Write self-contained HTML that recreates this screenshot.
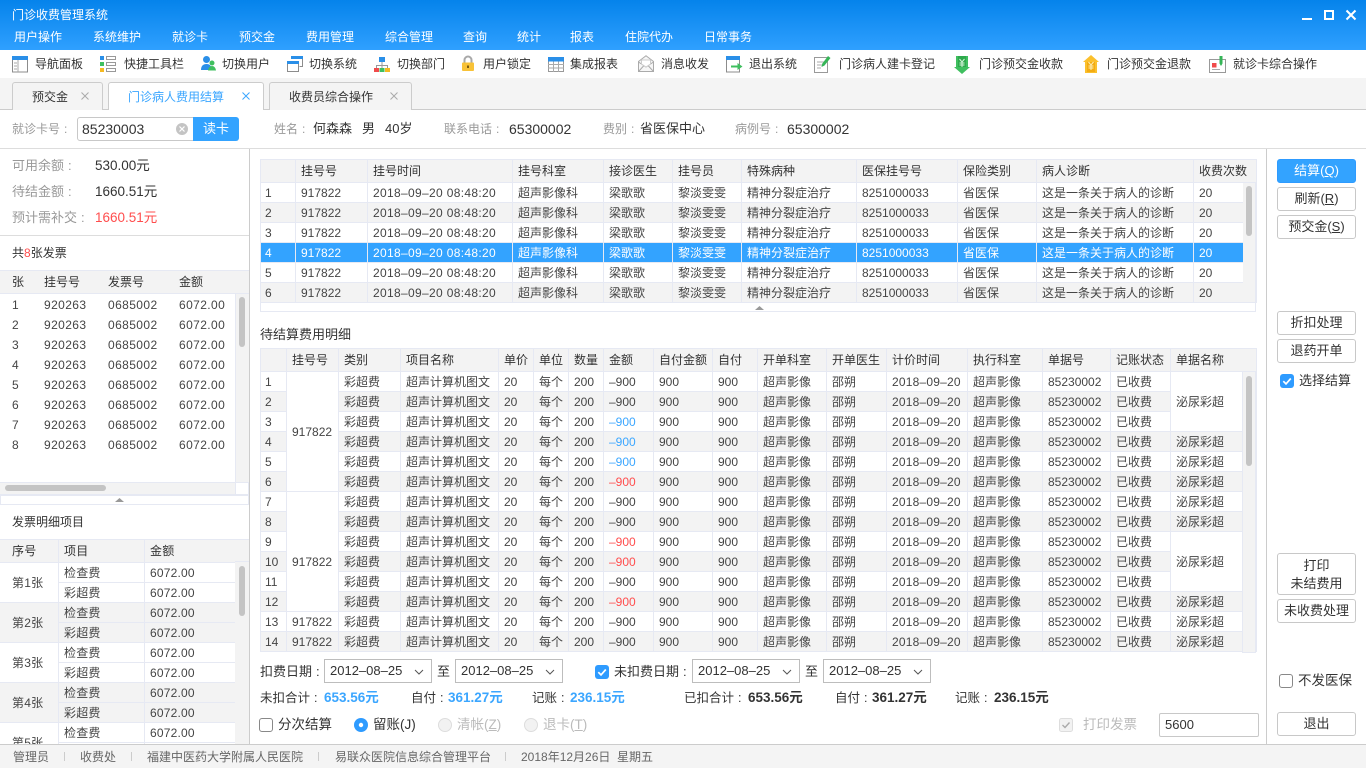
<!DOCTYPE html>
<html lang="zh"><head><meta charset="utf-8"><title>门诊收费管理系统</title>
<style>
*{box-sizing:border-box}
html,body{margin:0;padding:0}
body{width:1366px;height:768px;overflow:hidden;position:relative;background:#fff;font:12px/16px "Liberation Sans","Noto Sans CJK SC",sans-serif;color:#333}
.a{position:absolute;white-space:nowrap;line-height:16px}
.b{position:absolute}
.g{color:#999}
.w{color:#fff}
.c{font-weight:400;margin-left:4px}
svg{position:absolute;overflow:visible}
table{position:absolute;border-collapse:collapse;table-layout:fixed;font-size:12px;color:#444;background:#fff}
td,th{border:1px solid #e6e9f3;height:20px;padding:0 0 0 5px;font-weight:400;text-align:left;white-space:nowrap;overflow:hidden;line-height:16px}
th{background:#f3f3f3;color:#333;height:23px}
tr.z td{background:#f3f3f3}
tr.s td{background:#33a3ff;color:#fff}
td.m,tr.z td.m{background:#fff}
.d{letter-spacing:.33px}
.e{letter-spacing:.2px}
.bl{color:#3ba6ff}.rd{color:#ff4d4d}
.btn{position:absolute;left:1277px;width:79px;border:1px solid #c8c8c8;border-radius:3px;background:#fff;text-align:center;font-size:13px;line-height:22px;color:#333}
.sel{position:absolute;top:659px;width:108px;height:24px;border:1px solid #bdbdbd;font-size:13px;line-height:22px;padding-left:5px;color:#333;background:#fff}
.sel svg{left:89px;top:9px}
.tab{position:absolute;top:82px;height:28px;border:1px solid #ccc;border-bottom:0;border-radius:3px 3px 0 0;background:#f4f4f4}
.sb{position:absolute;width:6px;background:#c4c4c4;border-radius:3px}
#l2 td{padding-top:1px}
u{text-underline-offset:1px}
</style></head><body>

<!-- title bar -->
<div class="b" style="left:0;top:0;width:1366px;height:50px;background:linear-gradient(#0583eb,#2fa0ff)"></div>
<span class="a w" style="left:12px;top:7px">门诊收费管理系统</span>
<span class="a w" style="left:14px;top:29px">用户操作</span>
<span class="a w" style="left:93px;top:29px">系统维护</span>
<span class="a w" style="left:172px;top:29px">就诊卡</span>
<span class="a w" style="left:239px;top:29px">预交金</span>
<span class="a w" style="left:306px;top:29px">费用管理</span>
<span class="a w" style="left:385px;top:29px">综合管理</span>
<span class="a w" style="left:463px;top:29px">查询</span>
<span class="a w" style="left:517px;top:29px">统计</span>
<span class="a w" style="left:570px;top:29px">报表</span>
<span class="a w" style="left:625px;top:29px">住院代办</span>
<span class="a w" style="left:704px;top:29px">日常事务</span>
<div class="b" style="left:1302px;top:18px;width:10px;height:2px;background:#fff"></div>
<div class="b" style="left:1324px;top:10px;width:10px;height:10px;border:2px solid #fff"></div>
<svg style="left:1346px;top:10px" width="10" height="10"><path d="M.5 .5L9.5 9.5M9.5 .5L.5 9.5" stroke="#fff" stroke-width="2" fill="none"/></svg>

<!-- toolbar -->
<div class="b" style="left:0;top:50px;width:1366px;height:28px;background:#fff"></div>
<svg style="left:12px;top:56px" width="16" height="17"><rect x=".5" y=".5" width="15" height="15.5" fill="#fff" stroke="#8c8c8c"/><rect width="16" height="4" fill="#2a8fe8"/><path d="M6 4v12M2 7h3M2 10h3M2 13h3" stroke="#aaa" fill="none"/></svg>
<span class="a" style="left:35px;top:56px">导航面板</span>
<svg style="left:100px;top:56px" width="16" height="16"><rect width="4" height="4" fill="#2a8fe8"/><rect y="6" width="4" height="4" fill="#3fbf5f"/><rect y="12" width="4" height="4" fill="#f5b920"/><path d="M6.500 .5h9v3h-9zM6.500 6.500h9v3h-9zM6.500 12.500h9v3h-9z" stroke="#999" fill="#fff"/></svg>
<span class="a" style="left:124px;top:56px">快捷工具栏</span>
<svg style="left:201px;top:56px" width="15" height="15"><circle cx="5.500" cy="3.500" r="3.500" fill="#2a8fe8"/><path d="M0 14c0-4 2-6 5.500-6s5 2 5.500 6z" fill="#2a8fe8"/><circle cx="11" cy="7" r="2.500" fill="#3fbf5f"/><path d="M7 14.500c.5-3 2-4.500 4-4.500s3.500 1.500 4 4.500z" fill="#3fbf5f"/></svg>
<span class="a" style="left:222px;top:56px">切换用户</span>
<svg style="left:287px;top:56px" width="16" height="16"><path d="M4.500 .5h11v10h-3" fill="#fff" stroke="#8c8c8c"/><rect x="4" width="12" height="3" fill="#2a8fe8"/><rect x=".5" y="5.500" width="11" height="10" fill="#fff" stroke="#8c8c8c"/><rect y="5" width="12" height="3" fill="#2a8fe8"/></svg>
<span class="a" style="left:309px;top:56px">切换系统</span>
<svg style="left:374px;top:57px" width="16" height="15"><path d="M8 4v4M2.500 11V8.500h11V11M8 8v3" stroke="#999" fill="none"/><rect x="5" width="6" height="5" fill="#2a8fe8"/><rect y="11" width="5" height="4" fill="#f04b4b"/><rect x="5.500" y="11" width="5" height="4" fill="#3fbf5f"/><rect x="11" y="11" width="5" height="4" fill="#f5b920"/></svg>
<span class="a" style="left:397px;top:56px">切换部门</span>
<svg style="left:462px;top:56px" width="12" height="15"><path d="M2.500 7V4a3.500 3.500 0 0 1 7 0v3" stroke="#a8a8a8" stroke-width="2" fill="none"/><rect y="6.500" width="12" height="8.500" rx="1" fill="#f8c237"/><rect x="5" y="9.500" width="2" height="2.500" fill="#7a5a10"/></svg>
<span class="a" style="left:483px;top:56px">用户锁定</span>
<svg style="left:548px;top:57px" width="16" height="15"><rect x=".5" y=".5" width="15" height="14" fill="#fff" stroke="#999"/><path d="M0 7.500h16M0 11h16M5.500 4v11M10.500 4v11" stroke="#aaa" fill="none"/><rect width="16" height="4.500" fill="#2a8fe8"/></svg>
<span class="a" style="left:570px;top:56px">集成报表</span>
<svg style="left:638px;top:55px" width="16" height="17"><path d="M.5 6.500L8 .7l7.500 5.800v10H.5z" fill="#f6f6f6" stroke="#aaa"/><path d="M.5 7l7.500 5 7.500-5M.5 16.500L6 10.500M15.500 16.500L10 10.500" stroke="#aaa" fill="none"/><path d="M3.500 5h9v4l-4.500 3-4.500-3z" fill="#fff" stroke="#ccc"/></svg>
<span class="a" style="left:661px;top:56px">消息收发</span>
<svg style="left:726px;top:56px" width="17" height="17"><rect x=".5" y=".5" width="13" height="15.500" fill="#fff" stroke="#8c8c8c"/><rect width="14" height="4" fill="#2a8fe8"/><path d="M5 9.500h6.500V7l5 3.500-5 3.500v-2.500H5z" fill="#3fbf5f"/></svg>
<span class="a" style="left:749px;top:56px">退出系统</span>
<svg style="left:814px;top:56px" width="17" height="17"><rect x=".5" y="1.500" width="13" height="15" fill="#fff" stroke="#999"/><path d="M3 6h7M3 9h5M3 12h4" stroke="#aaa" fill="none"/><path d="M14 0l2.500 2-6 7.500-3 1.500.7-3.200z" fill="#35b557"/></svg>
<span class="a" style="left:839px;top:56px">门诊病人建卡登记</span>
<svg style="left:954px;top:56px" width="16" height="18"><path d="M2 0h12v11h2l-8 7-8-7h2z" fill="#3fbf5f"/><path d="M4 0h8v11H4z" fill="#2ea94c"/><path d="M5.500 3L8 6l2.500-3M5.500 7h5M5.500 9h5M8 6v5" stroke="#d8f5dd" fill="none"/></svg>
<span class="a" style="left:979px;top:56px">门诊预交金收款</span>
<svg style="left:1083px;top:55px" width="16" height="18"><path d="M8 0l8 7h-2v11H2V7H0z" fill="#fbc02d"/><path d="M4 7h8v10H4z" fill="#f3ac12"/><path d="M5.500 7L8 10l2.500-3M5.500 11h5M5.500 13h5M8 10v5" stroke="#fdeeb8" fill="none"/></svg>
<span class="a" style="left:1107px;top:56px">门诊预交金退款</span>
<svg style="left:1209px;top:56px" width="17" height="17"><rect x=".5" y="3.500" width="16" height="13" fill="#fff" stroke="#999"/><rect x="3" y="7" width="4.500" height="4.500" fill="#f04b4b"/><path d="M3 13.500h8" stroke="#aaa"/><path d="M10.500 0h3v7.500l-1.500 2.500-1.500-2.500z" fill="#35b557"/></svg>
<span class="a" style="left:1233px;top:56px">就诊卡综合操作</span>

<!-- tabs -->
<div class="b" style="left:0;top:78px;width:1366px;height:32px;background:#f4f4f4;border-bottom:1px solid #ccc"></div>
<div class="tab" style="left:12px;width:91px"></div>
<span class="a" style="left:32px;top:89px">预交金</span>
<svg style="left:81px;top:92px" width="8" height="8"><path d="M.5 .5l7 7M7.500 .5l-7 7" stroke="#aaa" fill="none"/></svg>
<div class="tab" style="left:108px;width:156px;background:#fff"></div>
<span class="a" style="left:128px;top:89px;color:#3ba6ff">门诊病人费用结算</span>
<svg style="left:242px;top:92px" width="8" height="8"><path d="M.5 .5l7 7M7.500 .5l-7 7" stroke="#3ba6ff" fill="none"/></svg>
<div class="tab" style="left:269px;width:143px"></div>
<span class="a" style="left:289px;top:89px">收费员综合操作</span>
<svg style="left:390px;top:92px" width="8" height="8"><path d="M.5 .5l7 7M7.500 .5l-7 7" stroke="#aaa" fill="none"/></svg>

<!-- info bar -->
<div class="b" style="left:0;top:148px;width:1366px;height:1px;background:#ddd"></div>
<span class="a g" style="left:12px;top:121px">就诊卡号<span class="c">:</span></span>
<div class="b" style="left:77px;top:117px;width:117px;height:24px;border:1px solid #c8c8c8;border-radius:3px 0 0 3px"></div>
<span class="a" style="left:82px;top:121px;font-size:14px">85230003</span>
<svg style="left:176px;top:123px" width="12" height="12"><circle cx="6" cy="6" r="6" fill="#c4c4c4"/><path d="M3.500 3.500l5 5M8.500 3.500l-5 5" stroke="#fff" stroke-width="1.200"/></svg>
<div class="b w" style="left:193px;top:117px;width:46px;height:24px;background:#33a3ff;border-radius:0 3px 3px 0;text-align:center;line-height:24px;font-size:13px">读卡</div>
<span class="a g" style="left:274px;top:121px">姓名<span class="c">:</span></span><span class="a" style="left:313px;top:121px;font-size:13px">何森森</span>
<span class="a" style="left:362px;top:121px;font-size:13px">男</span><span class="a" style="left:385px;top:121px;font-size:13px">40岁</span>
<span class="a g" style="left:444px;top:121px">联系电话<span class="c">:</span></span><span class="a" style="left:509px;top:121px;font-size:14px">65300002</span>
<span class="a g" style="left:603px;top:121px">费别<span class="c">:</span></span><span class="a" style="left:640px;top:121px;font-size:13px">省医保中心</span>
<span class="a g" style="left:735px;top:121px">病例号<span class="c">:</span></span><span class="a" style="left:787px;top:121px;font-size:14px">65300002</span>

<!-- left panel -->
<div class="b" style="left:249px;top:149px;width:1px;height:595px;background:#ccc"></div>
<span class="a g" style="left:12px;top:158px;font-size:13px">可用余额<span class="c">:</span></span><span class="a" style="left:95px;top:158px;font-size:13.500px">530.00元</span>
<span class="a g" style="left:12px;top:184px;font-size:13px">待结金额<span class="c">:</span></span><span class="a" style="left:95px;top:184px;font-size:13.500px">1660.51元</span>
<span class="a g" style="left:12px;top:210px;font-size:13px">预计需补交<span class="c">:</span></span><span class="a rd" style="left:95px;top:210px;font-size:13.500px">1660.51元</span>
<div class="b" style="left:0;top:235px;width:249px;height:1px;background:#ddd"></div>
<span class="a" style="left:12px;top:245px">共<span class="rd">8</span>张发票</span>
<div class="b" style="left:0;top:270px;width:249px;height:24px;background:#f3f3f3;border-top:1px solid #e6e9f3;border-bottom:1px solid #e6e9f3"></div>
<span class="a" style="left:12px;top:274px">张</span><span class="a" style="left:44px;top:274px">挂号号</span><span class="a" style="left:108px;top:274px">发票号</span><span class="a" style="left:179px;top:274px">金额</span>
<div class="a" style="left:12px;top:295px;line-height:20px;letter-spacing:.4px;color:#444">1<br>2<br>3<br>4<br>5<br>6<br>7<br>8</div>
<div class="a" style="left:44px;top:295px;line-height:20px;letter-spacing:.4px;color:#444">920263<br>920263<br>920263<br>920263<br>920263<br>920263<br>920263<br>920263</div>
<div class="a" style="left:108px;top:295px;line-height:20px;letter-spacing:.4px;color:#444">0685002<br>0685002<br>0685002<br>0685002<br>0685002<br>0685002<br>0685002<br>0685002</div>
<div class="a" style="left:179px;top:295px;line-height:20px;letter-spacing:.4px;color:#444">6072.00<br>6072.00<br>6072.00<br>6072.00<br>6072.00<br>6072.00<br>6072.00<br>6072.00</div>
<div class="b" style="left:235px;top:294px;width:14px;height:188px;background:#f3f3f3;border-left:1px solid #e6e9f3"></div>
<div class="sb" style="left:239px;top:297px;height:50px"></div>
<div class="b" style="left:0;top:482px;width:249px;height:13px;background:#f3f3f3;border-top:1px solid #e6e9f3;border-bottom:1px solid #e6e9f3"></div>
<div class="b" style="left:235px;top:482px;width:14px;height:13px;background:#fff;border:1px solid #e6e9f3"></div>
<div class="b" style="left:5px;top:485px;width:101px;height:6px;background:#c4c4c4;border-radius:3px"></div>
<div class="b" style="left:0;top:495px;width:249px;height:10px;background:#fff;border:1px solid #e6e9f3"></div>
<svg style="left:115px;top:498px" width="9" height="4"><path d="M0 4L4.500 0 9 4z" fill="#999"/></svg>
<span class="a" style="left:12px;top:514px">发票明细项目</span>

<div class="b" style="left:0;top:539px;width:249px;height:205px;overflow:hidden">
<table id="l2" style="left:-1px;top:0;width:237px;letter-spacing:.2px">
<colgroup><col style="width:59px"><col style="width:86px"><col style="width:92px"></colgroup>
<tr><th style="padding-left:12px">序号</th><th>项目</th><th>金额</th></tr>
<tr><td rowspan="2" style="padding-left:12px">第1张</td><td>检查费</td><td>6072.00</td></tr>
<tr><td>彩超费</td><td>6072.00</td></tr>
<tr class="z"><td rowspan="2" style="padding-left:12px">第2张</td><td>检查费</td><td>6072.00</td></tr>
<tr class="z"><td>彩超费</td><td>6072.00</td></tr>
<tr><td rowspan="2" style="padding-left:12px">第3张</td><td>检查费</td><td>6072.00</td></tr>
<tr><td>彩超费</td><td>6072.00</td></tr>
<tr class="z"><td rowspan="2" style="padding-left:12px">第4张</td><td>检查费</td><td>6072.00</td></tr>
<tr class="z"><td>彩超费</td><td>6072.00</td></tr>
<tr><td rowspan="2" style="padding-left:12px">第5张</td><td>检查费</td><td>6072.00</td></tr>
<tr><td>彩超费</td><td>6072.00</td></tr>
</table>
</div>
<div class="b" style="left:235px;top:539px;width:14px;height:23px;background:#f3f3f3;border-top:1px solid #e6e9f3;border-bottom:1px solid #e6e9f3"></div>
<div class="b" style="left:235px;top:562px;width:14px;height:182px;background:#f3f3f3"></div>
<div class="sb" style="left:239px;top:566px;height:50px"></div>

<!-- upper table -->
<div class="b" style="left:260px;top:159px;width:996px;height:153px;border:1px solid #e6e9f3"></div>
<table style="left:260px;top:159px;width:996px">
<colgroup><col style="width:35px"><col style="width:72px"><col style="width:145px"><col style="width:91px"><col style="width:69px"><col style="width:69px"><col style="width:115px"><col style="width:101px"><col style="width:79px"><col style="width:157px"><col style="width:63px"></colgroup>
<tr><th></th><th>挂号号</th><th>挂号时间</th><th>挂号科室</th><th>接诊医生</th><th>挂号员</th><th>特殊病种</th><th>医保挂号号</th><th>保险类别</th><th>病人诊断</th><th>收费次数</th></tr>
<tr><td style="padding-left:4px">1</td><td>917822</td><td class="d">2018–09–20 08:48:20</td><td>超声影像科</td><td>梁歌歌</td><td>黎淡雯雯</td><td>精神分裂症治疗</td><td>8251000033</td><td>省医保</td><td>这是一条关于病人的诊断</td><td>20</td></tr>
<tr class="z"><td style="padding-left:4px">2</td><td>917822</td><td class="d">2018–09–20 08:48:20</td><td>超声影像科</td><td>梁歌歌</td><td>黎淡雯雯</td><td>精神分裂症治疗</td><td>8251000033</td><td>省医保</td><td>这是一条关于病人的诊断</td><td>20</td></tr>
<tr><td style="padding-left:4px">3</td><td>917822</td><td class="d">2018–09–20 08:48:20</td><td>超声影像科</td><td>梁歌歌</td><td>黎淡雯雯</td><td>精神分裂症治疗</td><td>8251000033</td><td>省医保</td><td>这是一条关于病人的诊断</td><td>20</td></tr>
<tr class="s"><td style="padding-left:4px">4</td><td>917822</td><td class="d">2018–09–20 08:48:20</td><td>超声影像科</td><td>梁歌歌</td><td>黎淡雯雯</td><td>精神分裂症治疗</td><td>8251000033</td><td>省医保</td><td>这是一条关于病人的诊断</td><td>20</td></tr>
<tr><td style="padding-left:4px">5</td><td>917822</td><td class="d">2018–09–20 08:48:20</td><td>超声影像科</td><td>梁歌歌</td><td>黎淡雯雯</td><td>精神分裂症治疗</td><td>8251000033</td><td>省医保</td><td>这是一条关于病人的诊断</td><td>20</td></tr>
<tr class="z"><td style="padding-left:4px">6</td><td>917822</td><td class="d">2018–09–20 08:48:20</td><td>超声影像科</td><td>梁歌歌</td><td>黎淡雯雯</td><td>精神分裂症治疗</td><td>8251000033</td><td>省医保</td><td>这是一条关于病人的诊断</td><td>20</td></tr>
</table>
<div class="b" style="left:1243px;top:183px;width:13px;height:119px;background:#f3f3f3;border-right:1px solid #e6e9f3"></div>
<div class="sb" style="left:1246px;top:186px;height:50px"></div>
<svg style="left:755px;top:306px" width="9" height="4"><path d="M0 4L4.500 0 9 4z" fill="#999"/></svg>

<span class="a" style="left:260px;top:327px;font-size:13px">待结算费用明细</span>

<!-- lower table -->
<table style="left:260px;top:348px;width:996px" id="lt">
<colgroup><col style="width:26px"><col style="width:52px"><col style="width:62px"><col style="width:98px"><col style="width:35px"><col style="width:35px"><col style="width:35px"><col style="width:50px"><col style="width:59px"><col style="width:45px"><col style="width:69px"><col style="width:60px"><col style="width:81px"><col style="width:75px"><col style="width:68px"><col style="width:60px"><col style="width:86px"></colgroup>
<tr><th></th><th>挂号号</th><th>类别</th><th>项目名称</th><th>单价</th><th>单位</th><th>数量</th><th>金额</th><th>自付金额</th><th>自付</th><th>开单科室</th><th>开单医生</th><th>计价时间</th><th>执行科室</th><th>单据号</th><th>记账状态</th><th>单据名称</th></tr>
<tr><td style="padding-left:4px">1</td><td class="m" rowspan="6">917822</td><td>彩超费</td><td>超声计算机图文</td><td>20</td><td>每个</td><td>200</td><td>–900</td><td>900</td><td>900</td><td>超声影像</td><td>邵朔</td><td class="e">2018–09–20</td><td>超声影像</td><td>85230002</td><td>已收费</td><td class="m" rowspan="3">泌尿彩超</td></tr>
<tr class="z"><td style="padding-left:4px">2</td><td>彩超费</td><td>超声计算机图文</td><td>20</td><td>每个</td><td>200</td><td>–900</td><td>900</td><td>900</td><td>超声影像</td><td>邵朔</td><td class="e">2018–09–20</td><td>超声影像</td><td>85230002</td><td>已收费</td></tr>
<tr><td style="padding-left:4px">3</td><td>彩超费</td><td>超声计算机图文</td><td>20</td><td>每个</td><td>200</td><td class="bl">–900</td><td>900</td><td>900</td><td>超声影像</td><td>邵朔</td><td class="e">2018–09–20</td><td>超声影像</td><td>85230002</td><td>已收费</td></tr>
<tr class="z"><td style="padding-left:4px">4</td><td>彩超费</td><td>超声计算机图文</td><td>20</td><td>每个</td><td>200</td><td class="bl">–900</td><td>900</td><td>900</td><td>超声影像</td><td>邵朔</td><td class="e">2018–09–20</td><td>超声影像</td><td>85230002</td><td>已收费</td><td>泌尿彩超</td></tr>
<tr><td style="padding-left:4px">5</td><td>彩超费</td><td>超声计算机图文</td><td>20</td><td>每个</td><td>200</td><td class="bl">–900</td><td>900</td><td>900</td><td>超声影像</td><td>邵朔</td><td class="e">2018–09–20</td><td>超声影像</td><td>85230002</td><td>已收费</td><td>泌尿彩超</td></tr>
<tr class="z"><td style="padding-left:4px">6</td><td>彩超费</td><td>超声计算机图文</td><td>20</td><td>每个</td><td>200</td><td class="rd">–900</td><td>900</td><td>900</td><td>超声影像</td><td>邵朔</td><td class="e">2018–09–20</td><td>超声影像</td><td>85230002</td><td>已收费</td><td>泌尿彩超</td></tr>
<tr><td style="padding-left:4px">7</td><td class="m" rowspan="6" style="padding-top:20px">917822</td><td>彩超费</td><td>超声计算机图文</td><td>20</td><td>每个</td><td>200</td><td>–900</td><td>900</td><td>900</td><td>超声影像</td><td>邵朔</td><td class="e">2018–09–20</td><td>超声影像</td><td>85230002</td><td>已收费</td><td>泌尿彩超</td></tr>
<tr class="z"><td style="padding-left:4px">8</td><td>彩超费</td><td>超声计算机图文</td><td>20</td><td>每个</td><td>200</td><td>–900</td><td>900</td><td>900</td><td>超声影像</td><td>邵朔</td><td class="e">2018–09–20</td><td>超声影像</td><td>85230002</td><td>已收费</td><td>泌尿彩超</td></tr>
<tr><td style="padding-left:4px">9</td><td>彩超费</td><td>超声计算机图文</td><td>20</td><td>每个</td><td>200</td><td class="rd">–900</td><td>900</td><td>900</td><td>超声影像</td><td>邵朔</td><td class="e">2018–09–20</td><td>超声影像</td><td>85230002</td><td>已收费</td><td class="m" rowspan="3">泌尿彩超</td></tr>
<tr class="z"><td style="padding-left:4px">10</td><td>彩超费</td><td>超声计算机图文</td><td>20</td><td>每个</td><td>200</td><td class="rd">–900</td><td>900</td><td>900</td><td>超声影像</td><td>邵朔</td><td class="e">2018–09–20</td><td>超声影像</td><td>85230002</td><td>已收费</td></tr>
<tr><td style="padding-left:4px">11</td><td>彩超费</td><td>超声计算机图文</td><td>20</td><td>每个</td><td>200</td><td>–900</td><td>900</td><td>900</td><td>超声影像</td><td>邵朔</td><td class="e">2018–09–20</td><td>超声影像</td><td>85230002</td><td>已收费</td></tr>
<tr class="z"><td style="padding-left:4px">12</td><td>彩超费</td><td>超声计算机图文</td><td>20</td><td>每个</td><td>200</td><td class="rd">–900</td><td>900</td><td>900</td><td>超声影像</td><td>邵朔</td><td class="e">2018–09–20</td><td>超声影像</td><td>85230002</td><td>已收费</td><td>泌尿彩超</td></tr>
<tr><td style="padding-left:4px">13</td><td>917822</td><td>彩超费</td><td>超声计算机图文</td><td>20</td><td>每个</td><td>200</td><td>–900</td><td>900</td><td>900</td><td>超声影像</td><td>邵朔</td><td class="e">2018–09–20</td><td>超声影像</td><td>85230002</td><td>已收费</td><td>泌尿彩超</td></tr>
<tr class="z"><td style="padding-left:4px">14</td><td>917822</td><td>彩超费</td><td>超声计算机图文</td><td>20</td><td>每个</td><td>200</td><td>–900</td><td>900</td><td>900</td><td>超声影像</td><td>邵朔</td><td class="e">2018–09–20</td><td>超声影像</td><td>85230002</td><td>已收费</td><td>泌尿彩超</td></tr>
</table>
<div class="b" style="left:1242px;top:372px;width:14px;height:281px;background:#f3f3f3;border:solid #e6e9f3;border-width:0 1px 1px 1px"></div>
<div class="sb" style="left:1246px;top:376px;height:90px"></div>

<!-- bottom form -->
<span class="a" style="left:260px;top:664px;font-size:13px">扣费日期<span class="c">:</span></span>
<div class="sel" style="left:324px">2012–08–25<svg width="10" height="6"><path d="M1 1l4 4 4-4" stroke="#555" fill="none"/></svg></div>
<span class="a" style="left:437px;top:664px;font-size:13px">至</span>
<div class="sel" style="left:455px">2012–08–25<svg width="10" height="6"><path d="M1 1l4 4 4-4" stroke="#555" fill="none"/></svg></div>
<svg style="left:595px;top:665px" width="14" height="14"><rect width="14" height="14" rx="3" fill="#2e9bff"/><path d="M3.300 7.200l2.700 2.700 4.800-5.400" stroke="#fff" stroke-width="1.700" fill="none"/></svg>
<span class="a" style="left:614px;top:664px;font-size:13px">未扣费日期<span class="c">:</span></span>
<div class="sel" style="left:692px">2012–08–25<svg width="10" height="6"><path d="M1 1l4 4 4-4" stroke="#555" fill="none"/></svg></div>
<span class="a" style="left:805px;top:664px;font-size:13px">至</span>
<div class="sel" style="left:823px">2012–08–25<svg width="10" height="6"><path d="M1 1l4 4 4-4" stroke="#555" fill="none"/></svg></div>

<span class="a" style="left:260px;top:690px;font-size:12.500px">未扣合计<span class="c">:</span></span><span class="a bl" style="left:324px;top:690px;font-size:13.500px;font-weight:700">653.56元</span>
<span class="a" style="left:411px;top:690px;font-size:12.500px">自付<span class="c">:</span></span><span class="a bl" style="left:448px;top:690px;font-size:13.500px;font-weight:700">361.27元</span>
<span class="a" style="left:532px;top:690px;font-size:12.500px">记账<span class="c">:</span></span><span class="a bl" style="left:570px;top:690px;font-size:13.500px;font-weight:700">236.15元</span>
<span class="a" style="left:684px;top:690px;font-size:12.500px">已扣合计<span class="c">:</span></span><span class="a" style="left:748px;top:690px;font-size:13.500px;font-weight:700">653.56元</span>
<span class="a" style="left:835px;top:690px;font-size:12.500px">自付<span class="c">:</span></span><span class="a" style="left:872px;top:690px;font-size:13.500px;font-weight:700">361.27元</span>
<span class="a" style="left:955px;top:690px;font-size:12.500px">记账<span class="c">:</span></span><span class="a" style="left:994px;top:690px;font-size:13.500px;font-weight:700">236.15元</span>

<div class="b" style="left:259px;top:718px;width:14px;height:14px;border:1px solid #888;border-radius:3px;background:#fff"></div>
<span class="a" style="left:278px;top:717px;font-size:13.500px">分次结算</span>
<svg style="left:354px;top:718px" width="14" height="14"><circle cx="7" cy="7" r="7" fill="#2e9bff"/><circle cx="7" cy="7" r="2.200" fill="#fff"/></svg>
<span class="a" style="left:373px;top:717px;font-size:13.500px">留账(J)</span>
<svg style="left:438px;top:718px" width="14" height="14"><circle cx="7" cy="7" r="6.500" fill="#f2f2f2" stroke="#ddd"/></svg>
<span class="a" style="left:457px;top:717px;font-size:13.500px;color:#bbb">清帐(<u>Z</u>)</span>
<svg style="left:524px;top:718px" width="14" height="14"><circle cx="7" cy="7" r="6.500" fill="#f2f2f2" stroke="#ddd"/></svg>
<span class="a" style="left:543px;top:717px;font-size:13.500px;color:#bbb">退卡(<u>T</u>)</span>

<svg style="left:1059px;top:718px" width="14" height="14"><rect x=".5" y=".5" width="13" height="13" rx="2" fill="#f2f2f2" stroke="#ddd"/><path d="M3.500 7l2.500 2.500 4.500-5" stroke="#aaa" stroke-width="1.400" fill="none"/></svg>
<span class="a" style="left:1083px;top:717px;font-size:13.500px;color:#bbb">打印发票</span>
<div class="b" style="left:1159px;top:713px;width:100px;height:24px;border:1px solid #c8c8c8;border-radius:2px;font-size:13px;line-height:22px;padding-left:5px">5600</div>

<!-- right panel -->
<div class="b" style="left:1266px;top:149px;width:1px;height:595px;background:#ccc"></div>
<div class="btn" style="top:159px;height:24px;background:#33a3ff;border-color:#2e9bff;color:#fff">结算(<u>Q</u>)</div>
<div class="btn" style="top:187px;height:24px">刷新(<u>R</u>)</div>
<div class="btn" style="top:215px;height:24px">预交金(<u>S</u>)</div>
<div class="btn" style="top:311px;height:24px">折扣处理</div>
<div class="btn" style="top:339px;height:24px">退药开单</div>
<svg style="left:1280px;top:374px" width="14" height="14"><rect width="14" height="14" rx="3" fill="#2e9bff"/><path d="M3.300 7.200l2.700 2.700 4.800-5.400" stroke="#fff" stroke-width="1.700" fill="none"/></svg>
<span class="a" style="left:1299px;top:373px;font-size:13px">选择结算</span>
<div class="btn" style="top:553px;height:42px;line-height:18px;padding-top:3px">打印<br>未结费用</div>
<div class="btn" style="top:599px;height:24px">未收费处理</div>
<div class="b" style="left:1279px;top:674px;width:14px;height:14px;border:1px solid #888;border-radius:3px;background:#fff"></div>
<span class="a" style="left:1298px;top:673px;font-size:13.500px">不发医保</span>
<div class="btn" style="top:712px;height:24px">退出</div>

<!-- status bar -->
<div class="b" style="left:0;top:744px;width:1366px;height:24px;background:#f4f4f4;border-top:1px solid #ccc"></div>
<span class="a" style="left:13px;top:749px;color:#666">管理员</span>
<div class="b" style="left:64px;top:752px;width:1px;height:9px;background:#ccc"></div>
<span class="a" style="left:80px;top:749px;color:#666">收费处</span>
<div class="b" style="left:131px;top:752px;width:1px;height:9px;background:#ccc"></div>
<span class="a" style="left:147px;top:749px;color:#666">福建中医药大学附属人民医院</span>
<div class="b" style="left:318px;top:752px;width:1px;height:9px;background:#ccc"></div>
<span class="a" style="left:335px;top:749px;color:#666">易联众医院信息综合管理平台</span>
<div class="b" style="left:505px;top:752px;width:1px;height:9px;background:#ccc"></div>
<span class="a" style="left:521px;top:749px;color:#666">2018年12月26日&nbsp;&nbsp;星期五</span>

</body></html>
